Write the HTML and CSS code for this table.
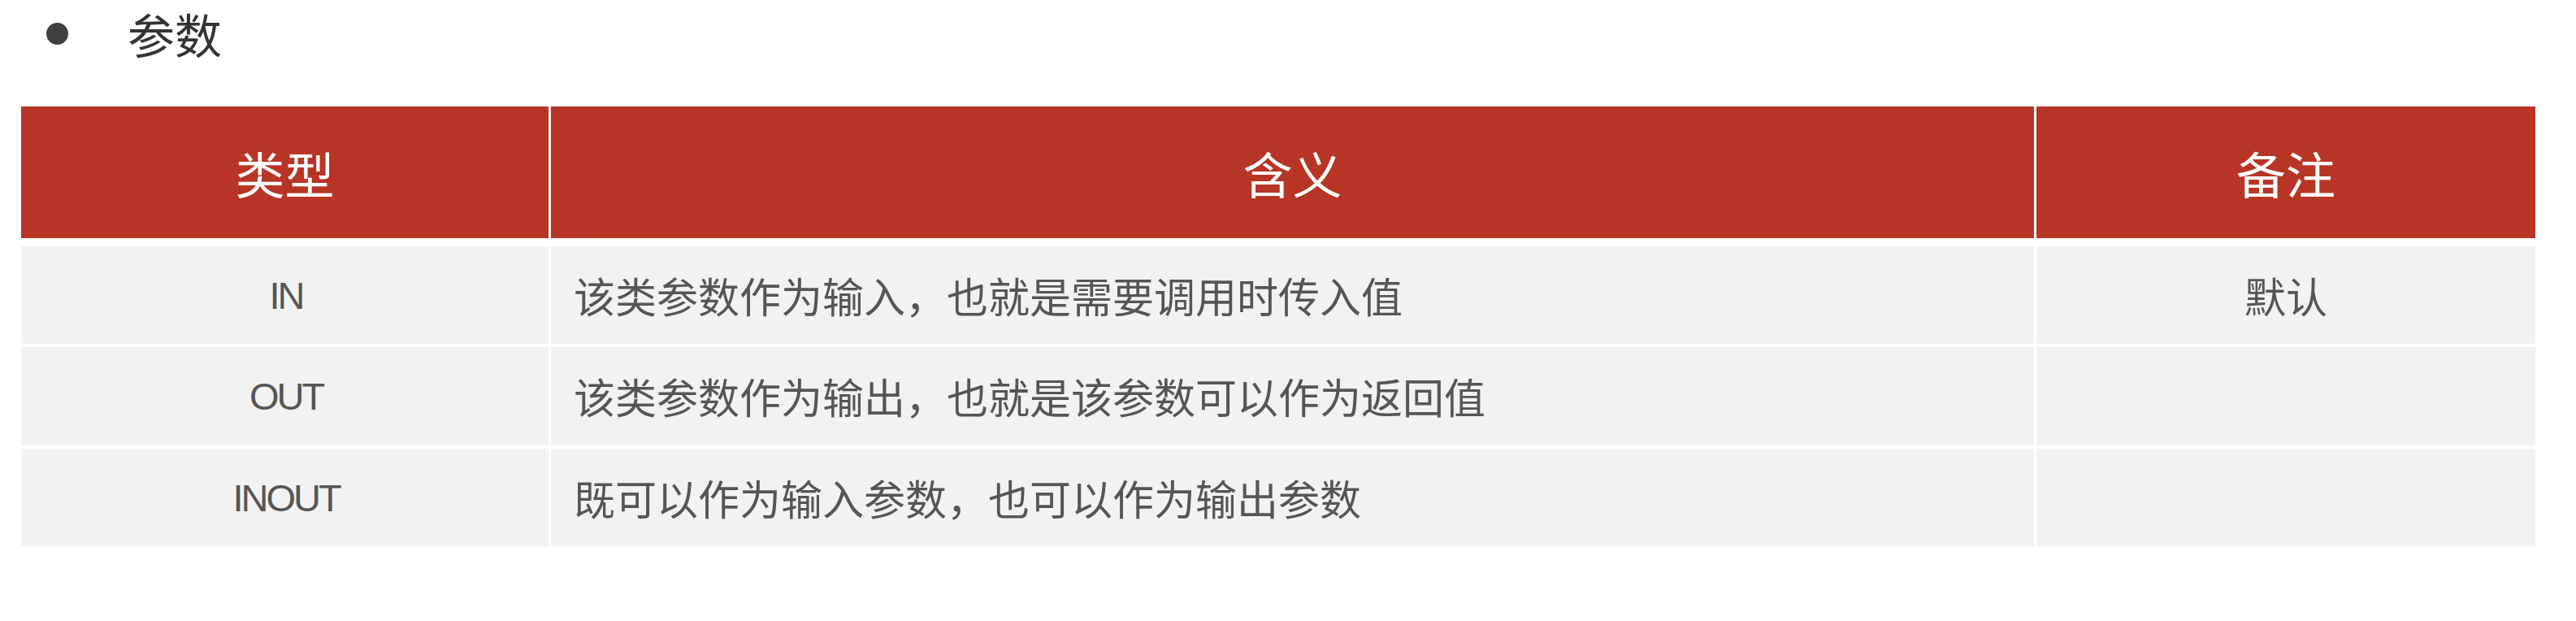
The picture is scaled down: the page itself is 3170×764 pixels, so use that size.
FILE: index.html
```html
<!DOCTYPE html>
<html lang="zh-CN">
<head>
<meta charset="utf-8">
<title>参数</title>
<link rel="stylesheet" href="styles.css">
</head>
<body>
<div class="page">
  <div class="title-row">
    <span class="bullet"></span>
    <span class="title">参数</span>
  </div>
  <div class="table">
    <div class="cell head c1">类型</div>
    <div class="cell head c2">含义</div>
    <div class="cell head c3">备注</div>

    <div class="cell c1 latin">IN</div>
    <div class="cell c2">该类参数作为输入，也就是需要调用时传入值</div>
    <div class="cell c3">默认</div>

    <div class="cell c1 latin">OUT</div>
    <div class="cell c2">该类参数作为输出，也就是该参数可以作为返回值</div>
    <div class="cell c3"></div>

    <div class="cell c1 latin">INOUT</div>
    <div class="cell c2">既可以作为输入参数，也可以作为输出参数</div>
    <div class="cell c3"></div>
  </div>
</div>
</body>
</html>
```

FILE: styles.css
```css
html, body {
  margin: 0;
  padding: 0;
  background: #ffffff;
}

body {
  font-family: "Noto Sans CJK SC", "Liberation Sans", sans-serif;
  color: #555555;
}

.page {
  width: 3170px;
  height: 764px;
  padding: 0 50px 0 26px;
  box-sizing: border-box;
}

.title-row {
  display: flex;
  align-items: center;
  height: 82px;
  padding-left: 31px;
  margin-bottom: 49px;
}

.bullet {
  width: 27px;
  height: 27px;
  border-radius: 50%;
  background: #404040;
  flex: none;
}

.title {
  margin-left: 73px;
  font-size: 58px;
  line-height: 1;
  color: #333333;
}

.table {
  display: grid;
  grid-template-columns: 649px 1825px 1fr;
  grid-template-rows: 168px 120px 121px 120px;
  column-gap: 3px;
  row-gap: 4px;
  width: 3094px;
}

.cell {
  background: #f2f2f2;
  display: flex;
  align-items: center;
  font-size: 51px;
  line-height: 1;
  color: #555555;
}

.head {
  background: #b83526;
  color: #ffffff;
  font-size: 61px;
  justify-content: center;
  margin-bottom: 6px;
}

.c1, .c3 {
  justify-content: center;
}

.c2 {
  padding-left: 28px;
}

.head.c2 {
  padding-left: 0;
}

.latin {
  font-family: "Liberation Sans", "Noto Sans CJK SC", sans-serif;
  font-size: 47px;
  letter-spacing: -3px;
  padding-left: 3px;
}
```
